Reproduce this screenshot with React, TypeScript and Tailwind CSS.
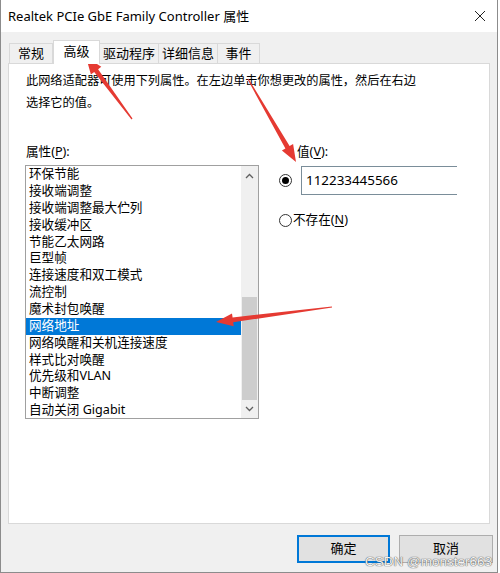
import React from 'react';

const items = [
  '环保节能',
  '接收端调整',
  '接收端调整最大伫列',
  '接收缓冲区',
  '节能乙太网路',
  '巨型帧',
  '连接速度和双工模式',
  '流控制',
  '魔术封包唤醒',
  '网络地址',
  '网络唤醒和关机连接速度',
  '样式比对唤醒',
  '优先级和VLAN',
  '中断调整',
  '自动关闭 Gigabit',
];

const tabs = [
  { label: '常规', w: 'w-[44px]' },
  { label: '高级', w: 'w-[47px]', active: true },
  { label: '驱动程序', w: 'w-[60px]' },
  { label: '详细信息', w: 'w-[60px]' },
  { label: '事件', w: 'w-[43px]' },
];

// tapered arrow: thin tail, wide head
function arrowPoints(tx: number, ty: number, hx: number, hy: number) {
  const dx = hx - tx;
  const dy = hy - ty;
  const len = Math.hypot(dx, dy);
  const ux = dx / len;
  const uy = dy / len;
  const px = -uy;
  const py = ux;
  const headLen = 17;
  const bx = hx - ux * headLen;
  const by = hy - uy * headLen;
  const pts = [
    [tx + px * 0.6, ty + py * 0.6],
    [bx + px * 2.4, by + py * 2.4],
    [bx + px * 6.5, by + py * 6.5],
    [hx, hy],
    [bx - px * 6.5, by - py * 6.5],
    [bx - px * 2.4, by - py * 2.4],
    [tx - px * 0.6, ty - py * 0.6],
  ];
  return pts.map((p) => `${p[0].toFixed(1)},${p[1].toFixed(1)}`).join(' ');
}

function Radio({ checked }: { checked?: boolean }) {
  return (
    <div className="w-[13px] h-[13px] rounded-full border border-[#333333] bg-white flex items-center justify-center shrink-0">
      {checked && <div className="w-[7px] h-[7px] rounded-full bg-black" />}
    </div>
  );
}

export default function App() {
  return (
    <div className="w-[500px] h-[573px] bg-white relative overflow-hidden font-[Noto_Sans,Noto_Sans_CJK_SC,sans-serif] text-black">
      <div className="w-[498px] h-[573px] border border-t-0 border-[#8c8c8c] bg-[#f0f0f0] flex flex-col">
        {/* title bar */}
        <div className="h-[32px] bg-white flex items-center justify-between pl-[7px] pr-[10px]">
          <span className="text-[13px] leading-none">Realtek PCIe GbE Family Controller 属性</span>
          <svg width="12" height="12" viewBox="0 0 12 12" className="mr-[1px]">
            <path d="M1 1L11 11M11 1L1 11" stroke="#222" strokeWidth="1" />
          </svg>
        </div>

        <div className="flex-1 flex flex-col pl-[7px] pr-[7px] pt-[8px]">
          {/* tabs */}
          <div className="h-[23px] flex items-end pl-[2px] relative z-10">
            {tabs.map((t) =>
              t.active ? (
                <div
                  key={t.label}
                  className={`${t.w} h-[24px] -mb-[1px] bg-white border border-b-0 border-[#d9d9d9] flex items-center justify-center text-[13px] pb-[2px]`}
                >
                  {t.label}
                </div>
              ) : (
                <div
                  key={t.label}
                  className={`${t.w} h-[20px] bg-[#f0f0f0] border border-b-0 border-[#d9d9d9] -ml-[1px] flex items-center justify-center text-[13px]`}
                >
                  {t.label}
                </div>
              )
            )}
          </div>

          {/* panel */}
          <div className="h-[461px] bg-white border border-[#d9d9d9] w-[482px]">
            <div className="pl-[17px] pt-[6px] text-[12.2px] leading-[22px]">
              <p>此网络适配器可使用下列属性。在左边单击你想更改的属性，然后在右边</p>
              <p>选择它的值。</p>
            </div>

            <div className="flex pl-[16px] mt-[28px]">
              {/* properties list */}
              <div className="w-[234px]">
                <div className="text-[12.6px] leading-[20px] pl-[1px]">
                  属性(<span className="underline underline-offset-2">P</span>):
                </div>
                <div className="mt-[3px] h-[254px] border border-[#a0a0a0] flex">
                  <div className="flex-1">
                    {items.map((it) => (
                      <div
                        key={it}
                        className={`h-[16.86px] flex items-center pl-[3px] text-[12.6px] leading-none ${
                          it === '网络地址' ? 'bg-[#0078d7] text-white' : ''
                        }`}
                      >
                        {it}
                      </div>
                    ))}
                  </div>
                  <div className="w-[17px] bg-[#f0f0f0] flex flex-col">
                    <div className="h-[20px] flex items-center justify-center">
                      <svg width="9" height="6" viewBox="0 0 9 6">
                        <path d="M1 5L4.5 1.5L8 5" stroke="#606060" strokeWidth="1.3" fill="none" />
                      </svg>
                    </div>
                    <div className="flex-1 flex flex-col justify-end">
                      <div className="h-[103px] bg-[#cdcdcd] mx-[1px]" />
                    </div>
                    <div className="h-[18px] flex items-center justify-center">
                      <svg width="9" height="6" viewBox="0 0 9 6">
                        <path d="M1 1L4.5 4.5L8 1" stroke="#606060" strokeWidth="1.3" fill="none" />
                      </svg>
                    </div>
                  </div>
                </div>
              </div>

              {/* value */}
              <div className="ml-[20px] flex-1">
                <div className="text-[12.6px] leading-[20px] pl-[18px]">
                  值(<span className="underline underline-offset-2">V</span>):
                </div>
                <div className="flex items-center mt-[4px]">
                  <Radio checked />
                  <div className="ml-[9px] w-[156px] h-[29px] border border-r-0 border-[#7a8d99] flex items-center pl-[4px] text-[13.4px]">
                    112233445566
                  </div>
                </div>
                <div className="flex items-center mt-[16px] text-[12.6px]">
                  <Radio />
                  <span className="ml-[1px]">
                    不存在(<span className="underline underline-offset-2">N</span>)
                  </span>
                </div>
              </div>
            </div>
          </div>

          {/* buttons */}
          <div className="flex justify-end gap-[9px] mt-[11px] -mr-[3px]">
            <div className="w-[93px] h-[28px] bg-[#e1e1e1] border-2 border-[#0078d7] flex items-center justify-center text-[13px] leading-none pb-[2px]">
              确定
            </div>
            <div className="w-[94px] h-[28px] bg-[#e1e1e1] border border-[#adadad] flex items-center justify-center text-[13px] leading-none pb-[2px]">
              取消
            </div>
          </div>
        </div>
      </div>

      {/* watermark */}
      <div className="absolute left-[365px] top-[554px] text-[13.5px] leading-[15px] font-[Liberation_Sans,sans-serif] text-[#f4f4f4] [text-shadow:0_0_1px_#555,0_0_1px_#555]">
        CSDN @monster663
      </div>

      {/* red annotation arrows */}
      <svg className="absolute inset-0 pointer-events-none" width="500" height="573">
        <polygon points={arrowPoints(132, 119, 86, 57)} fill="#e53a32" />
        <polygon points={arrowPoints(248, 79, 296, 162)} fill="#e53a32" />
        <polygon points={arrowPoints(332, 307, 216, 322)} fill="#e53a32" />
      </svg>
    </div>
  );
}
